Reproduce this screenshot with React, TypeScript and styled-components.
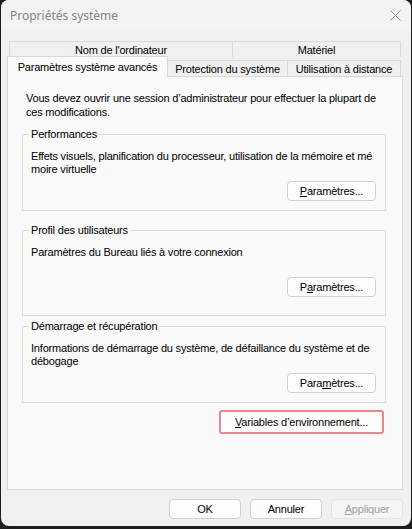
import React from 'react'
import styled, { createGlobalStyle } from 'styled-components'

const GlobalStyle = createGlobalStyle`
  html, body {
    margin: 0;
    padding: 0;
    background: #1e1e1e;
  }
  body {
    font-family: "Liberation Sans", Arial, sans-serif;
    font-size: 11px;
    letter-spacing: -0.2px;
    color: #000;
  }
`

const Window = styled.div`
  width: 410px;
  height: 526px;
  margin: 0 0 0 1px;
  background: #f0f0f0;
  border-radius: 8px;
  overflow: hidden;
  display: flex;
  flex-direction: column;
`

const TitleBar = styled.div`
  height: 31px;
  flex: none;
  background: #f3f3f3;
  display: flex;
  align-items: center;
  justify-content: space-between;
  padding: 0 10px 0 9px;
`

const Title = styled.span`
  font-family: "Noto Sans", "Open Sans", sans-serif;
  font-size: 12px;
  letter-spacing: 0;
  color: #858585;
`

const Body = styled.div`
  flex: 1;
  display: flex;
  flex-direction: column;
  padding: 10px 8px 0 6px;
`

const TabRow = styled.div<{ $offset: number }>`
  display: flex;
  align-items: flex-end;
  margin-left: ${p => p.$offset}px;
  margin-top: ${p => (p.$offset > 0 ? 0 : -1)}px;
  height: ${p => (p.$offset > 0 ? 16 : 20)}px;
`

const Tab = styled.div<{ $w: number; $active?: boolean }>`
  width: ${p => p.$w}px;
  height: ${p => (p.$active ? 21 : 16)}px;
  box-sizing: border-box;
  border: 1px solid #d9d9d9;
  border-bottom: none;
  background: ${p => (p.$active ? '#f9f9f9' : '#f0f0f0')};
  display: flex;
  align-items: center;
  justify-content: center;
  margin-bottom: ${p => (p.$active ? -1 : 0)}px;
  position: relative;
  z-index: ${p => (p.$active ? 2 : 1)};
  & + & {
    margin-left: -1px;
  }
`

const Panel = styled.div`
  height: 414px;
  box-sizing: border-box;
  border: 1px solid #d9d9d9;
  background: #f9f9f9;
  padding: 14px 16px 0 14px;
  display: flex;
  flex-direction: column;
`

const Intro = styled.p`
  margin: 0;
  padding-left: 4px;
  line-height: 14px;
`

const Group = styled.fieldset<{ $mt: number; $pb: number }>`
  margin: ${p => p.$mt}px 0 0 0;
  padding: 9px 9px ${p => p.$pb}px 8px;
  border: 1px solid #dcdcdc;
  display: flex;
  flex-direction: column;
  min-width: 0;
`

const Legend = styled.legend`
  padding: 0 2px;
  margin-left: -2px;
  line-height: 13px;
`

const GroupText = styled.div`
  line-height: 13px;
  min-height: 26px;
`

const Button = styled.button<{ $w: number; $disabled?: boolean }>`
  width: ${p => p.$w}px;
  height: 20px;
  box-sizing: border-box;
  font-family: "Liberation Sans", Arial, sans-serif;
  font-size: 11px;
  letter-spacing: -0.2px;
  color: ${p => (p.$disabled ? '#a0a0a0' : '#000')};
  background: ${p => (p.$disabled ? '#f5f5f5' : '#fdfdfd')};
  border: 1px solid ${p => (p.$disabled ? '#e3e3e3' : '#d0d0d0')};
  border-radius: 4px;
  padding: 0;
`

const GroupButton = styled(Button)`
  align-self: flex-end;
  margin-top: 5px;
`

const FocusButton = styled(Button)`
  align-self: flex-end;
  margin: 7px 2px 0 0;
  height: 24px;
  border: 2px solid #e4888c;
  border-radius: 3px;
`

const Footer = styled.div`
  display: flex;
  justify-content: flex-end;
  gap: 9px;
  padding: 9px 0 0 0;
`

const Key = styled.span`
  text-decoration: underline;
  text-underline-offset: 1px;
`

const Close = () => (
  <svg width="11" height="11" viewBox="0 0 11 11">
    <path d="M0.5 0.5 L10.5 10.5 M10.5 0.5 L0.5 10.5" stroke="#8a8a8a" strokeWidth="1" fill="none" />
  </svg>
)

export default function App() {
  return (
    <>
      <GlobalStyle />
      <Window>
        <TitleBar>
          <Title>Propriétés système</Title>
          <Close />
        </TitleBar>
        <Body>
          <TabRow $offset={2}>
            <Tab $w={224}>Nom de l'ordinateur</Tab>
            <Tab $w={169}>Matériel</Tab>
          </TabRow>
          <TabRow $offset={0}>
            <Tab $w={161} $active>Paramètres système avancés</Tab>
            <Tab $w={121}>Protection du système</Tab>
            <Tab $w={114}>Utilisation à distance</Tab>
          </TabRow>
          <Panel>
            <Intro>
              Vous devez ouvrir une session d’administrateur pour effectuer la plupart de ces modifications.
            </Intro>
            <Group $mt={9} $pb={9}>
              <Legend>Performances</Legend>
              <GroupText>
                Effets visuels, planification du processeur, utilisation de la mémoire et mé moire virtuelle
              </GroupText>
              <GroupButton $w={89}><Key>P</Key>aramètres...</GroupButton>
            </Group>
            <Group $mt={13} $pb={18}>
              <Legend>Profil des utilisateurs</Legend>
              <GroupText>Paramètres du Bureau liés à votre connexion</GroupText>
              <GroupButton $w={89}>P<Key>a</Key>ramètres...</GroupButton>
            </Group>
            <Group $mt={4} $pb={9}>
              <Legend>Démarrage et récupération</Legend>
              <GroupText>
                Informations de démarrage du système, de défaillance du système et de débogage
              </GroupText>
              <GroupButton $w={89}>Para<Key>m</Key>ètres...</GroupButton>
            </Group>
            <FocusButton $w={165}><Key>V</Key>ariables d’environnement...</FocusButton>
          </Panel>
          <Footer>
            <Button $w={72}>OK</Button>
            <Button $w={72}>Annuler</Button>
            <Button $w={72} $disabled><Key>A</Key>ppliquer</Button>
          </Footer>
        </Body>
      </Window>
    </>
  )
}
